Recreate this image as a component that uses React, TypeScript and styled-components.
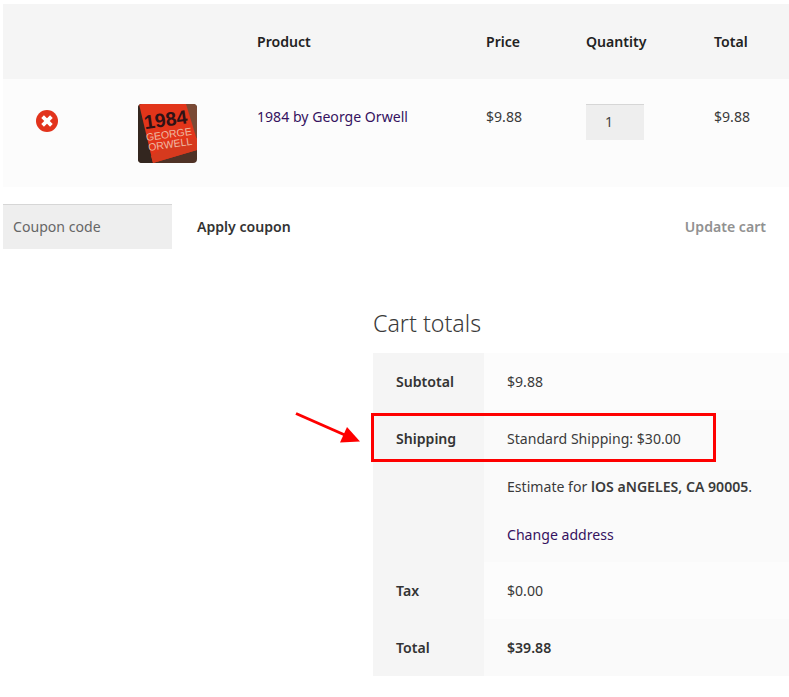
import styled, { createGlobalStyle } from "styled-components";

const GlobalStyle = createGlobalStyle`
  html, body {
    margin: 0;
    padding: 0;
    background: #fff;
  }
  body {
    font-family: "Noto Sans", "Open Sans", sans-serif;
    font-size: 14.1px;
    color: #3a3a3a;
  }
`;

const Page = styled.div`
  position: relative;
  width: 789px;
  height: 697px;
  padding: 4px 0 0 3px;
  box-sizing: border-box;
  overflow: hidden;
`;

const CartGrid = styled.div`
  display: grid;
  grid-template-columns: 112px 119px 229px 100px 128px 98px;
`;

const HeadCell = styled.div`
  height: 75px;
  box-sizing: border-box;
  padding: 28px 0 0 23px;
  background: #f5f5f5;
  color: #222;
  font-weight: 600;
  line-height: 20px;
`;

const BodyCell = styled.div<{ $inset?: number }>`
  height: 108px;
  box-sizing: border-box;
  padding: 28px 0 0 ${(p) => p.$inset ?? 23}px;
  background: #fcfcfc;
  line-height: 20px;
`;

const ItemLink = styled.a`
  color: #35125f;
  text-decoration: none;
`;

const RemoveIcon = styled.svg`
  display: block;
  margin-top: 3px;
`;

const Thumb = styled.svg`
  display: block;
  margin-top: -3px;
  border-radius: 4px;
`;

const QtyBox = styled.div`
  width: 58px;
  height: 36px;
  margin-top: -3px;
  box-sizing: border-box;
  padding: 7px 0 0 19px;
  background: #eee;
  border-top: 1px solid #d6d6d6;
  color: #444;
`;

const ActionRow = styled.div`
  display: flex;
  align-items: center;
  height: 45px;
  margin-top: 17px;
`;

const CouponBox = styled.div`
  width: 169px;
  height: 45px;
  box-sizing: border-box;
  padding: 0 0 2px 10px;
  display: flex;
  align-items: center;
  background: #eee;
  border-top: 1px solid #d6d6d6;
  color: #666;
`;

const ActionButton = styled.span<{ $muted?: boolean }>`
  font-weight: 600;
  color: ${(p) => (p.$muted ? "#919191" : "#333")};
`;

const ApplyLabel = styled(ActionButton)`
  margin-left: 25px;
`;

const UpdateLabel = styled(ActionButton)`
  margin-left: auto;
  margin-right: 23px;
`;

const Totals = styled.section`
  width: 416px;
  margin: 60px 0 0 370px;
`;

const TotalsTitle = styled.h2`
  margin: 0;
  height: 44px;
  font-size: 23.2px;
  line-height: 28px;
  font-weight: 300;
  color: #3a3a3a;
`;

const TotalsRow = styled.div<{ $height: number }>`
  display: grid;
  grid-template-columns: 111px 305px;
  height: ${(p) => p.$height}px;
`;

const RowLabel = styled.div`
  background: #f5f5f5;
  padding: 19px 0 0 23px;
  font-weight: 600;
  line-height: 20px;
  color: #333;
`;

const RowValue = styled.div<{ $strong?: boolean; $even?: boolean }>`
  background: ${(p) => (p.$even ? "#fafafa" : "#fcfcfc")};
  padding: 19px 0 0 23px;
  line-height: 20px;
  font-weight: ${(p) => (p.$strong ? 600 : 400)};
  color: ${(p) => (p.$strong ? "#333" : "#3a3a3a")};
`;

const ValueLine = styled.div`
  margin-top: 28px;
`;

const ValueLink = styled(ValueLine)`
  color: #35125f;
`;

const Strong = styled.strong`
  font-weight: 600;
`;

const Highlight = styled.div`
  position: absolute;
  left: 371px;
  top: 413px;
  width: 345px;
  height: 49px;
  box-sizing: border-box;
  border: 3px solid #fe0000;
`;

const Arrow = styled.svg`
  position: absolute;
  left: 290px;
  top: 408px;
`;

const App = () => (
  <>
    <GlobalStyle />
    <Page>
      <CartGrid>
        <HeadCell />
        <HeadCell />
        <HeadCell>Product</HeadCell>
        <HeadCell>Price</HeadCell>
        <HeadCell>Quantity</HeadCell>
        <HeadCell>Total</HeadCell>
        <BodyCell $inset={33}>
          <RemoveIcon width="22" height="22" viewBox="0 0 22 22">
            <circle cx="11" cy="11" r="11" fill="#e2331c" />
            <path d="M6.6 6.6l8.8 8.8M15.4 6.6l-8.8 8.8" stroke="#fff" strokeWidth="3.8" />
          </RemoveIcon>
        </BodyCell>
        <BodyCell>
          <Thumb width="59" height="59" viewBox="0 0 59 59">
            <rect width="59" height="59" fill="#4f3226" />
            <path d="M46 0h13v36z" fill="#7a4a35" />
            <path d="M0 0h3l12 59H0z" fill="#33261f" />
            <path d="M1 0h47l11 36v10L15 59z" fill="#e2351a" />
            <path d="M28 42l31-8v12L15 59l-2-7z" fill="#d63a1e" />
            <g transform="rotate(-8 30 25)" fontFamily="Liberation Sans, sans-serif" textAnchor="middle">
              <text x="29" y="22" fontSize="19.5" fontWeight="700" fill="#2e1216">1984</text>
              <text x="30" y="34" fontSize="10.5" fill="#eeb9a2">GEORGE</text>
              <text x="30" y="44" fontSize="10.5" fill="#eeb9a2">ORWELL</text>
            </g>
          </Thumb>
        </BodyCell>
        <BodyCell>
          <ItemLink href="#">1984 by George Orwell</ItemLink>
        </BodyCell>
        <BodyCell>$9.88</BodyCell>
        <BodyCell>
          <QtyBox>1</QtyBox>
        </BodyCell>
        <BodyCell>$9.88</BodyCell>
      </CartGrid>
      <ActionRow>
        <CouponBox>Coupon code</CouponBox>
        <ApplyLabel>Apply coupon</ApplyLabel>
        <UpdateLabel $muted>Update cart</UpdateLabel>
      </ActionRow>
      <Totals>
        <TotalsTitle>Cart totals</TotalsTitle>
        <TotalsRow $height={57}>
          <RowLabel>Subtotal</RowLabel>
          <RowValue>$9.88</RowValue>
        </TotalsRow>
        <TotalsRow $height={152}>
          <RowLabel>Shipping</RowLabel>
          <RowValue $even>
            Standard Shipping: $30.00
            <ValueLine>
              Estimate for <Strong>lOS aNGELES, CA 90005</Strong>.
            </ValueLine>
            <ValueLink>Change address</ValueLink>
          </RowValue>
        </TotalsRow>
        <TotalsRow $height={57}>
          <RowLabel>Tax</RowLabel>
          <RowValue>$0.00</RowValue>
        </TotalsRow>
        <TotalsRow $height={57}>
          <RowLabel>Total</RowLabel>
          <RowValue $strong $even>$39.88</RowValue>
        </TotalsRow>
      </Totals>
      <Highlight />
      <Arrow width="76" height="44" viewBox="0 0 76 44">
        <path d="M6 5.5l50 22" stroke="#fe0000" strokeWidth="3" fill="none" />
        <path d="M70 33.5L50 34.5 57 19z" fill="#fe0000" />
      </Arrow>
    </Page>
  </>
);

export default App;
